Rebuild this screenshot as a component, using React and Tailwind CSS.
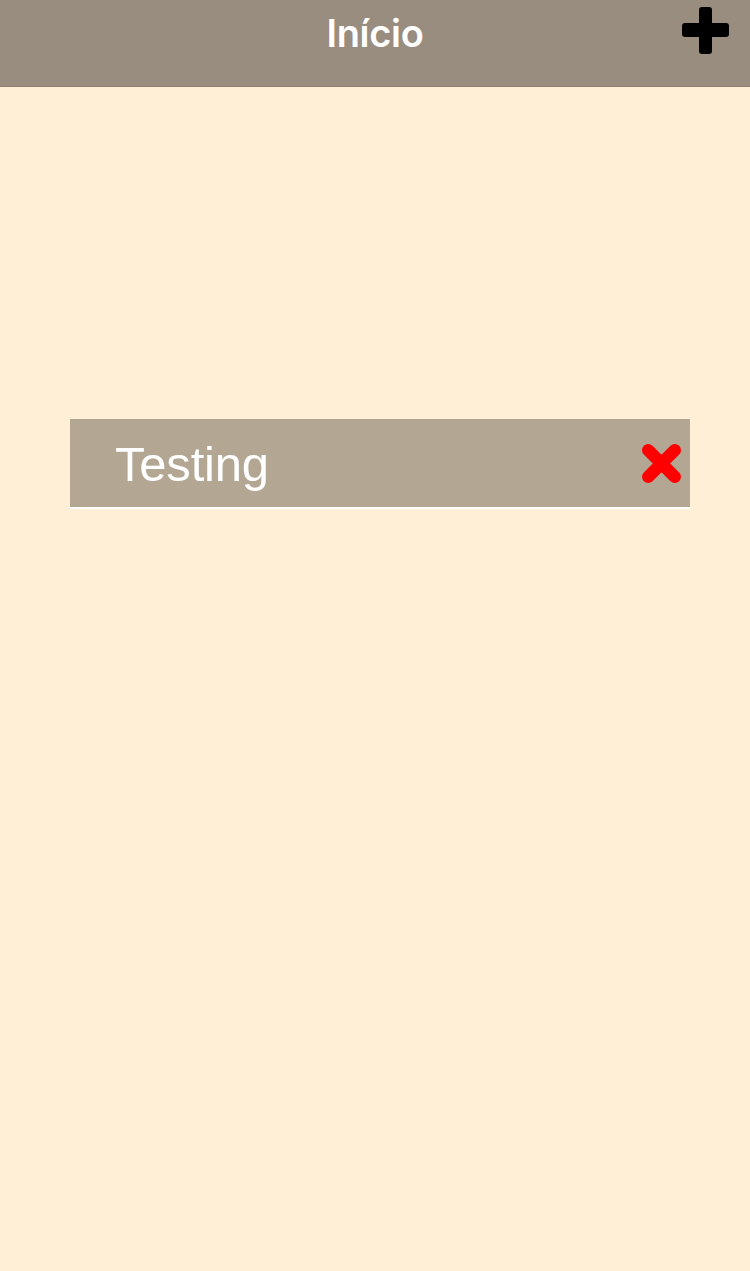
export default function App() {
  return (
    <div className="min-h-[1271px] w-[750px] bg-[#feefd6] flex flex-col" style={{ fontFamily: 'Inter, "Liberation Sans", sans-serif' }}>
      {/* ── Header ─────────────────────────────────────────────── */}
      <header className="relative h-[87px] bg-[#988d7e] border-b border-[#8c8273] flex items-start justify-center">
        <h1 className="mt-[11px] text-[38px] leading-[44px] font-semibold text-white tracking-[-0.3px]">Início</h1>
        <button className="absolute right-[21px] top-[7px] w-[47px] h-[47px]">
          <svg viewBox="0 0 47 47" className="w-full h-full">
            <rect x="17" y="0" width="13" height="47" rx="3" fill="#000" />
            <rect x="0" y="16" width="47" height="14" rx="3" fill="#000" />
          </svg>
        </button>
      </header>

      {/* ── List ───────────────────────────────────────────────── */}
      <main className="flex-1 flex flex-col pt-[332px] pl-[70px]">
        <div className="w-[620px] h-[90px] bg-[#b3a794] border-b-2 border-white flex items-center pl-[45px] pr-[8px]">
          <span className="flex-1 text-[49px] leading-none text-white font-normal tracking-[-0.2px] pt-[2px]" style={{ fontFamily: '"Liberation Sans", Arial, sans-serif' }}>Testing</span>
          <button className="w-[41px] h-[41px]">
            <svg viewBox="0 0 40 40" className="w-full h-full">
              <path d="M7 7 L33 33 M33 7 L7 33" stroke="#ff0000" strokeWidth="12" strokeLinecap="round" />
            </svg>
          </button>
        </div>
      </main>
    </div>
  )
}
